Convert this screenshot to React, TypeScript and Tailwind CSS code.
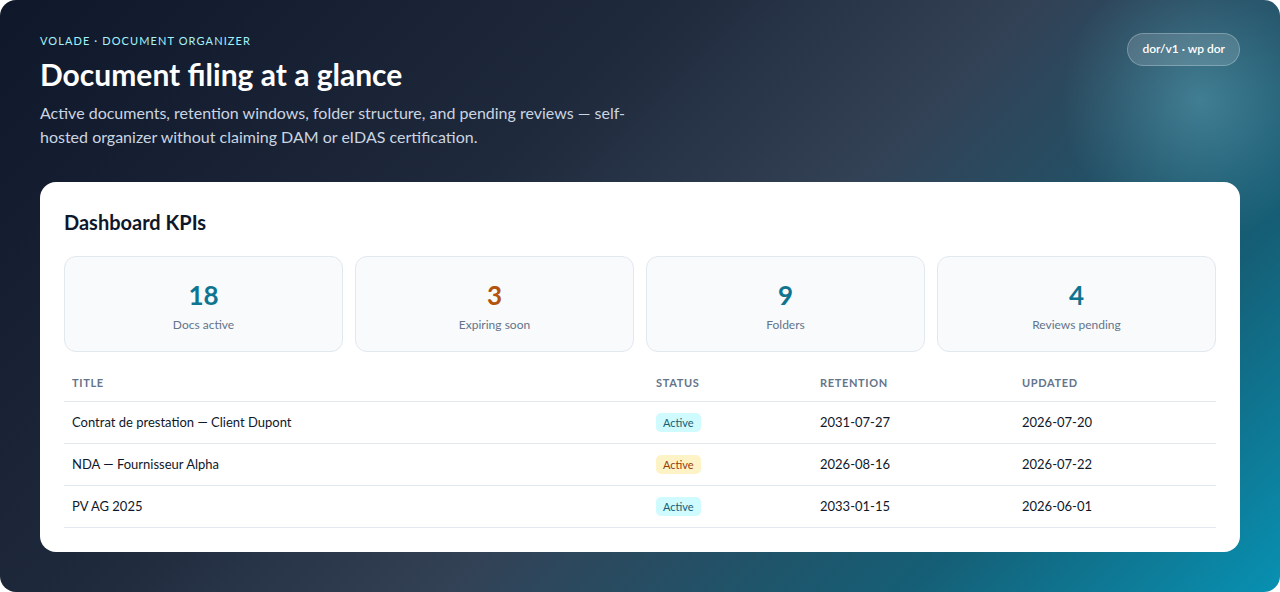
const kpis = [
  { value: '18', label: 'Docs active', tone: 'text-[#0e7490]' },
  { value: '3', label: 'Expiring soon', tone: 'text-[#b45309]' },
  { value: '9', label: 'Folders', tone: 'text-[#0e7490]' },
  { value: '4', label: 'Reviews pending', tone: 'text-[#0e7490]' },
]

const docs = [
  { title: 'Contrat de prestation — Client Dupont', status: 'ok', retention: '2031-07-27', updated: '2026-07-20' },
  { title: 'NDA — Fournisseur Alpha', status: 'warn', retention: '2026-08-16', updated: '2026-07-22' },
  { title: 'PV AG 2025', status: 'ok', retention: '2033-01-15', updated: '2026-06-01' },
]

function StatusPill({ status }: { status: string }) {
  if (status === 'warn') return (
    <span className="inline-block rounded-[5px] bg-[#fef3c7] px-[7px] py-[1.5px] text-[11px] leading-4 text-[#92400e]">Active</span>
  )
  return (
    <span className="inline-block rounded-[5px] bg-[#cffafe] px-[7px] py-[1.5px] text-[11px] leading-4 text-[#155e75]">Active</span>
  )
}

export default function App() {
  return (
    <div
      className="relative min-h-[592px] overflow-hidden rounded-[16px] bg-[linear-gradient(135deg,#0f172a_0%,#1e293b_35%,#334155_55%,#155e75_80%,#0891b2_100%)] px-10 pt-[33px] pb-10 text-white"
      style={{ fontFamily: 'Lato, "Noto Sans", sans-serif' }}
    >
      <div className="pointer-events-none absolute right-[-60px] top-[-40px] h-[280px] w-[280px] rounded-full bg-[radial-gradient(circle,rgba(103,180,200,0.45)_0%,rgba(103,180,200,0.15)_45%,rgba(103,180,200,0)_70%)]" />

      <div className="relative flex items-start justify-between">
        <div>
          <p className="text-[11px] uppercase tracking-[0.1em] text-[#a5f3fc]">Volade · Document Organizer</p>
          <h1 className="mt-[6px] text-[30px] font-bold leading-9">Document filing at a glance</h1>
          <p className="mt-[9px] max-w-[600px] text-base leading-6 text-[#cbd5e1]">
            Active documents, retention windows, folder structure, and pending reviews — self-hosted organizer without claiming DAM or eIDAS certification.
          </p>
        </div>
        <span className="rounded-full border border-white/25 bg-white/15 px-[14px] pt-[7px] pb-[8px] text-xs font-semibold leading-4 text-white">
          dor/v1 · wp dor
        </span>
      </div>

      <div className="relative mt-[33px] rounded-[16px] bg-white px-6 pt-[26px] pb-6 text-[#0f172a]">
        <h2 className="text-xl font-bold leading-7">Dashboard KPIs</h2>

        <div className="mt-[20px] grid grid-cols-4 gap-3">
          {kpis.map(k => (
            <div key={k.label} className="flex h-24 flex-col items-center justify-center rounded-xl border border-[#e2e8f0] bg-[#f8fafc] pt-[5px]">
              <div className={`text-[26px] font-bold leading-8 ${k.tone}`}>{k.value}</div>
              <div className="mt-[6px] text-xs text-[#64748b]">{k.label}</div>
            </div>
          ))}
        </div>

        <table className="mt-[23px] w-full border-collapse text-[13px]">
          <thead>
            <tr className="border-b border-[#e2e8f0] text-left">
              <th className="w-[584px] px-2 pb-[10px] text-[11px] font-bold uppercase tracking-[0.06em] text-[#64748b]">Title</th>
              <th className="w-[164px] px-2 pb-[10px] text-[11px] font-bold uppercase tracking-[0.06em] text-[#64748b]">Status</th>
              <th className="w-[202px] px-2 pb-[10px] text-[11px] font-bold uppercase tracking-[0.06em] text-[#64748b]">Retention</th>
              <th className="px-2 pb-[10px] text-[11px] font-bold uppercase tracking-[0.06em] text-[#64748b]">Updated</th>
            </tr>
          </thead>
          <tbody>
            {docs.map(d => (
              <tr key={d.title} className="h-[42px] border-b border-[#e2e8f0]">
                <td className="px-2">{d.title}</td>
                <td className="px-2"><StatusPill status={d.status} /></td>
                <td className="px-2">{d.retention}</td>
                <td className="px-2">{d.updated}</td>
              </tr>
            ))}
          </tbody>
        </table>
      </div>
    </div>
  )
}
